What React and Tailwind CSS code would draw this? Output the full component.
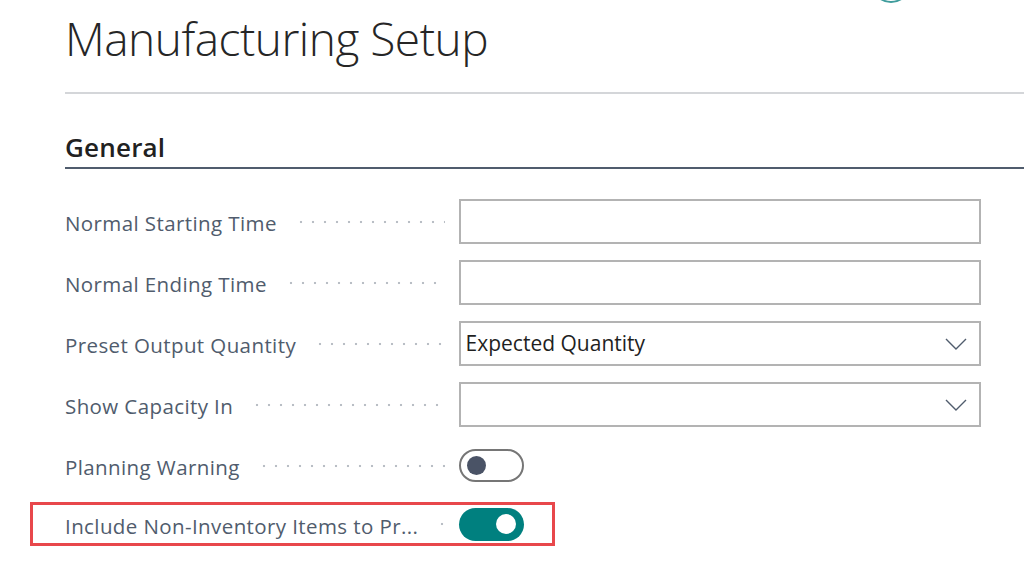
import React from "react";

const font = { fontFamily: '"Open Sans", "Noto Sans", Arial, sans-serif' };

function Leader() {
  return (
    <div className="flex-1 h-[4px] ml-[18px] mr-[14px] bg-[radial-gradient(circle,#b9bec5_1px,transparent_1.6px)] bg-[length:12px_4px] bg-repeat-x" />
  );
}

function Chevron() {
  return (
    <svg width="22" height="12" viewBox="0 0 22 12" fill="none">
      <path d="M1 1l10 10L21 1" stroke="#505c6d" strokeWidth="1.4" />
    </svg>
  );
}

function Label({ children }) {
  return (
    <span className="pt-[4px] text-[20.5px] tracking-[0.4px] text-[#505c6d] whitespace-nowrap">{children}</span>
  );
}

function Field({ label, children }) {
  return (
    <div className="flex items-center h-[61px]">
      <div className="flex items-center w-[394px]">
        <Label>{label}</Label>
        <Leader />
      </div>
      {children}
    </div>
  );
}

function TextBox({ value, select }) {
  return (
    <div className="w-[523px] h-[45px] border-2 border-[#b3b3b3] flex items-center justify-between pl-[5px] pr-[12px]">
      <span className="text-[21px] text-[#1f1f1f]">{value}</span>
      {select && <Chevron />}
    </div>
  );
}

function Toggle({ on }) {
  return on ? (
    <div className="w-[65px] h-[33px] rounded-full bg-[#00807f] flex items-center justify-end pr-[8px]">
      <div className="w-[20px] h-[20px] rounded-full bg-white" />
    </div>
  ) : (
    <div className="w-[65px] h-[33px] rounded-full border-2 border-[#767676] bg-white flex items-center pl-[6px]">
      <div className="w-[19px] h-[19px] rounded-full bg-[#4a5366]" />
    </div>
  );
}

export default function App() {
  return (
    <div className="w-[1024px] h-[578px] bg-white overflow-hidden" style={font}>
      <div className="h-0 flex justify-end pr-[113px]">
        <div className="w-[40px] h-[40px] rounded-full border-2 border-[#3f9c9c] -translate-y-[37px]" />
      </div>
      <div className="pl-[65px]">
        <h1 className="pt-[15px] text-[46px] leading-none font-light text-[#262626] tracking-[-0.5px]">
          Manufacturing Setup
        </h1>
        <div className="mt-[31px] h-[2px] bg-[#d4d6d9]" />
        <h2 className="mt-[38px] text-[26px] leading-[30px] font-semibold text-[#212121] tracking-[0.2px]">General</h2>
        <div className="mt-[5px] h-[2px] bg-[#505c6d]" />
        <div className="mt-[22px] pr-[43px]">
          <Field label="Normal Starting Time">
            <TextBox />
          </Field>
          <Field label="Normal Ending Time">
            <TextBox />
          </Field>
          <Field label="Preset Output Quantity">
            <TextBox value="Expected Quantity" select />
          </Field>
          <Field label="Show Capacity In">
            <TextBox select />
          </Field>
          <Field label="Planning Warning">
            <Toggle />
          </Field>
          <div className="mt-[6px] -ml-[35px] w-[525px] h-[44px] border-[3px] border-[#e8474b] flex items-center pl-[32px]">
            <div className="flex items-center w-[394px]">
              <Label>Include Non-Inventory Items to Pr...</Label>
              <Leader />
            </div>
            <Toggle on />
          </div>
        </div>
      </div>
    </div>
  );
}
